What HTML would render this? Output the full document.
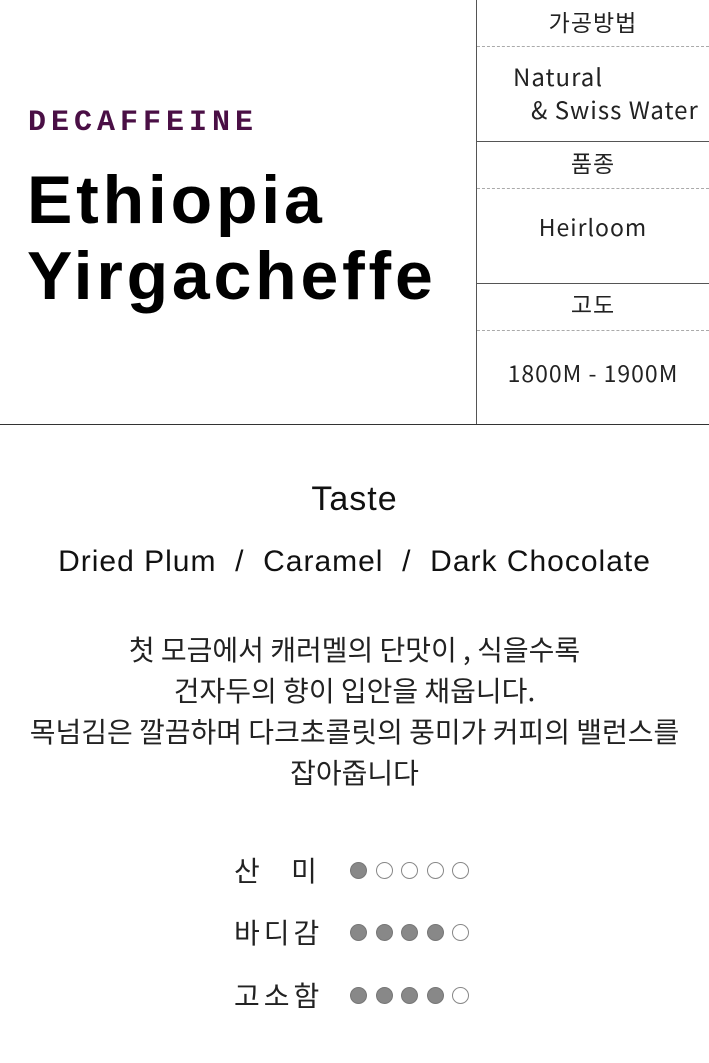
<!DOCTYPE html>
<html><head><meta charset="utf-8"><style>
body{margin:0;width:709px;height:1063px;background:#fff;position:relative;overflow:hidden;font-family:"Liberation Sans","Noto Sans CJK KR",sans-serif;color:#111}
.a{position:absolute}
.r{position:absolute;left:477px;width:232px;text-align:center;font-family:"Noto Sans CJK KR","Liberation Sans",sans-serif;font-size:23px;color:#222;letter-spacing:1px}
.dash{position:absolute;left:477px;width:232px;border-top:1px dashed #aaa}
.sol{position:absolute;left:477px;width:232px;border-top:1px solid #555}
.c{position:absolute;width:17px;height:17px;border-radius:50%;box-sizing:border-box}
.f{background:#888;border:1px solid #777}
.e{background:#fff;border:1px solid #888}
.lab{position:absolute;left:234px;font-family:"Noto Sans CJK KR",sans-serif;font-size:28px;color:#222}
</style></head><body>
<div class="a" style="left:476px;top:0;width:1px;height:425px;background:#555"></div>
<div class="a" style="left:0;top:424px;width:709px;height:1px;background:#333"></div>
<div class="r" style="top:4px">가공방법</div>
<div class="dash" style="top:46px"></div>
<div class="a" style="left:513px;top:58px;font-family:'Noto Sans CJK KR',sans-serif;font-size:24px;color:#222;letter-spacing:1px">Natural</div>
<div class="a" style="left:531px;top:91px;font-family:'Noto Sans CJK KR',sans-serif;font-size:24px;color:#222;letter-spacing:1px">&amp; Swiss Water</div>
<div class="sol" style="top:141px"></div>
<div class="r" style="top:145px">품종</div>
<div class="dash" style="top:188px"></div>
<div class="r" style="top:209px">Heirloom</div>
<div class="sol" style="top:283px"></div>
<div class="r" style="top:286px">고도</div>
<div class="dash" style="top:330px"></div>
<div class="r" style="top:355px">1800M - 1900M</div>
<div class="a" style="left:28px;top:106px;font-family:'Liberation Mono',monospace;font-weight:bold;font-size:30px;color:#4a0f45;letter-spacing:5px">DECAFFEINE</div>
<div class="a" style="left:27px;top:162px;font-weight:bold;font-size:68px;line-height:76px;color:#000;letter-spacing:3.8px">Ethiopia<br>Yirgacheffe</div>
<div class="a" style="left:0;width:709px;top:480px;text-align:center;font-size:34px;letter-spacing:1px">Taste</div>
<div class="a" style="left:0;width:709px;top:545px;text-align:center;font-size:30px;letter-spacing:1px">Dried Plum &nbsp;/ &nbsp;Caramel &nbsp;/ &nbsp;Dark Chocolate</div>
<div class="a" style="left:0;width:709px;top:629px;text-align:center;font-family:'Noto Sans CJK KR',sans-serif;font-size:28px;line-height:41px;color:#222;letter-spacing:0px">첫 모금에서 캐러멜의 단맛이 , 식을수록<br>건자두의 향이 입안을 채웁니다.<br>목넘김은 깔끔하며 다크초콜릿의 풍미가 커피의 밸런스를<br>잡아줍니다</div>
<div class="lab" style="top:850px">산 &nbsp;&nbsp;&nbsp;&nbsp;미</div>
<div class="lab" style="top:912px;letter-spacing:4px">바디감</div>
<div class="lab" style="top:975px;letter-spacing:4px">고소함</div>
<div class="c f" style="left:350px;top:862px"></div><div class="c e" style="left:376px;top:862px"></div><div class="c e" style="left:401px;top:862px"></div><div class="c e" style="left:427px;top:862px"></div><div class="c e" style="left:452px;top:862px"></div>
<div class="c f" style="left:350px;top:924px"></div><div class="c f" style="left:376px;top:924px"></div><div class="c f" style="left:401px;top:924px"></div><div class="c f" style="left:427px;top:924px"></div><div class="c e" style="left:452px;top:924px"></div>
<div class="c f" style="left:350px;top:987px"></div><div class="c f" style="left:376px;top:987px"></div><div class="c f" style="left:401px;top:987px"></div><div class="c f" style="left:427px;top:987px"></div><div class="c e" style="left:452px;top:987px"></div>
</body></html>
